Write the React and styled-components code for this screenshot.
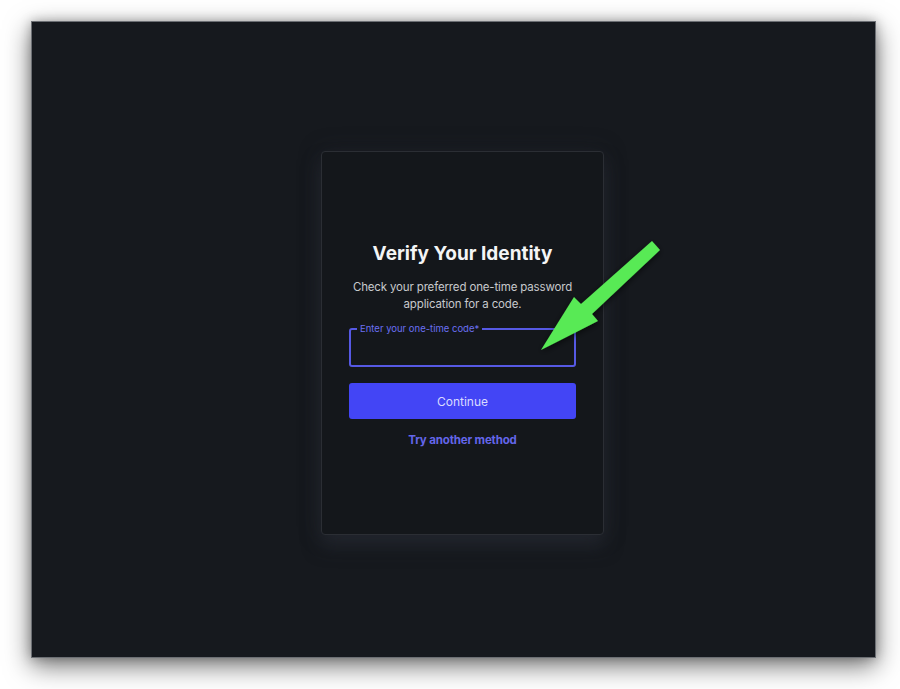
import React from "react";
import styled, { createGlobalStyle } from "styled-components";

const Global = createGlobalStyle`
  html, body { margin: 0; padding: 0; background: #ffffff; }
  body { font-family: Inter, "Noto Sans", sans-serif; width: 900px; height: 689px; overflow: hidden; }
`;

const Stage = styled.div`
  width: 900px;
  height: 689px;
  padding: 21px 0 0 31px;
  box-sizing: border-box;
  position: relative;
`;

const Frame = styled.div`
  width: 845px;
  height: 637px;
  background: #16191e;
  border: 1px solid #6c6f74;
  box-sizing: border-box;
  box-shadow: 0 8px 24px rgba(0, 0, 0, 0.55), 0 0 10px rgba(0, 0, 0, 0.25);
  display: flex;
  justify-content: flex-start;
  align-items: flex-start;
  padding: 129px 0 0 289px;
`;

const Card = styled.div`
  width: 283px;
  height: 384px;
  box-sizing: border-box;
  background: #14171b;
  border: 1px solid #2b2e34;
  border-radius: 4px;
  box-shadow: 0 12px 18px rgba(40, 44, 52, 0.55), 0 0 22px rgba(40, 44, 52, 0.35);
  padding: 89px 27px 0 27px;
  display: flex;
  flex-direction: column;
  align-items: stretch;
`;

const Title = styled.h1`
  margin: 0;
  font-size: 19px;
  line-height: 26px;
  font-weight: 700;
  color: #f4f5f6;
  text-align: center;
`;

const Subtitle = styled.p`
  margin: 12px -10px 0 -10px;
  font-size: 11.5px;
  line-height: 17px;
  letter-spacing: -0.15px;
  white-space: nowrap;
  color: #c7c9cc;
  text-align: center;
`;

const Field = styled.fieldset`
  margin: 10px 0 0 0;
  padding: 0 6px;
  height: 44px;
  box-sizing: border-box;
  border: 2px solid #5659e4;
  border-radius: 3px;
`;

const Legend = styled.legend`
  padding: 0 3px;
  font-size: 9.5px;
  line-height: 12px;
  color: #6b6ff2;
`;

const Input = styled.input`
  width: 100%;
  border: none;
  outline: none;
  background: transparent;
  color: #fff;
  font-size: 12px;
  height: 24px;
`;

const Button = styled.button`
  margin-top: 16px;
  height: 36px;
  border: none;
  border-radius: 3px;
  background: #4345f5;
  color: #d9dbff;
  font-family: Inter, "Noto Sans", sans-serif;
  font-size: 12px;
  cursor: pointer;
`;

const LinkText = styled.a`
  margin-top: 14px;
  font-size: 11.5px;
  letter-spacing: -0.15px;
  font-weight: 700;
  color: #6466ea;
  text-align: center;
  text-decoration: none;
`;

const Arrow = styled.svg`
  position: absolute;
  left: 0;
  top: 0;
  pointer-events: none;
`;

export default function App() {
  return (
    <>
      <Global />
      <Stage>
        <Frame>
          <Card>
            <Title>Verify Your Identity</Title>
            <Subtitle>
              Check your preferred one-time password
              <br />
              application for a code.
            </Subtitle>
            <Field>
              <Legend>Enter your one-time code*</Legend>
              <Input />
            </Field>
            <Button>Continue</Button>
            <LinkText>Try another method</LinkText>
          </Card>
        </Frame>
        <Arrow width="900" height="689" viewBox="0 0 900 689">
          <defs>
            <filter id="sh" x="-20%" y="-20%" width="140%" height="140%">
              <feDropShadow dx="0" dy="2" stdDeviation="3" floodColor="#000" floodOpacity="0.6" />
            </filter>
          </defs>
          <polygon
            filter="url(#sh)"
            fill="#58ea55"
            points="652,241 660,250 592,314 598,321 541,350 574,297 581,304"
          />
        </Arrow>
      </Stage>
    </>
  );
}
